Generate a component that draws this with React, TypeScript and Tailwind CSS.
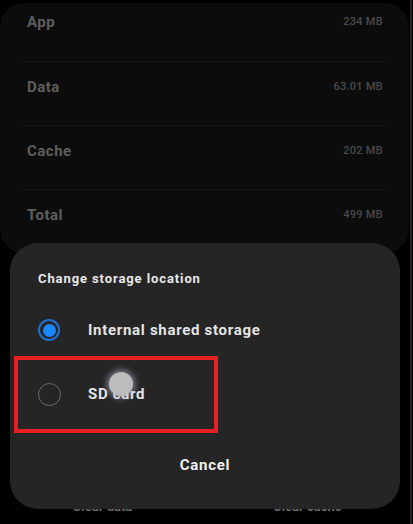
import React from "react";

const rows = [
  { label: "App", value: "234 MB" },
  { label: "Data", value: "63.01 MB" },
  { label: "Cache", value: "202 MB" },
  { label: "Total", value: "499 MB" },
];

export default function App() {
  return (
    <div
      className="relative w-[413px] h-[524px] overflow-hidden bg-black flex"
      style={{ fontFamily: "Roboto, 'Noto Sans', sans-serif" }}
    >
      <div className="w-[410px] flex flex-col pt-[3px]">
        <div className="w-[409px] h-[250px] shrink-0 rounded-[24px] bg-[#0c0c0c] flex flex-col">
          {rows.map((r, i) => (
            <div key={r.label} className="flex flex-col">
              {i > 0 && <div className="mx-[22px] h-px bg-[#161616]" />}
              <div
                className={
                  i === 0
                    ? "h-[58px] pb-[20px] flex items-center justify-between pl-[27px] pr-[26px]"
                    : "h-[63px] pb-[14px] flex items-center justify-between pl-[27px] pr-[26px]"
                }
              >
                <span className="text-[15px] font-bold text-[#5e5e5e] leading-5 tracking-[0.5px]">{r.label}</span>
                <span className="text-[11px] font-medium text-[#4a4a4a] leading-4 tracking-wide">{r.value}</span>
              </div>
            </div>
          ))}
        </div>
        <div className="grid grid-cols-2 mt-[246px] shrink-0">
          <span className="text-center text-[13px] font-bold text-[#6a6a6a] leading-4">Clear data</span>
          <span className="text-center text-[13px] font-bold text-[#6a6a6a] leading-4">Clear cache</span>
        </div>
      </div>
      <div className="w-[2px] h-full bg-[#2a2227]" />

      {/* Dialog */}
      <div className="absolute left-[10px] top-[243px] w-[390px] h-[266px] rounded-[28px] bg-[#252525] flex flex-col pt-[26px] pl-[28px]">
        <div className="h-5 flex items-center text-[13px] font-bold text-[#e8e8e8] tracking-[0.9px]">
          Change storage location
        </div>
        <div className="mt-[9px] h-[64px] flex items-center">
          <div className="w-[22px] h-[22px] rounded-full border-[2px] border-[#1d6fd0] flex items-center justify-center">
            <div className="w-[13px] h-[13px] rounded-full bg-[#1a86ff]" />
          </div>
          <span className="ml-[28px] text-[15px] font-bold text-[#e4e4e4] tracking-[0.7px]">Internal shared storage</span>
        </div>
        <div className="h-[64px] flex items-center">
          <div className="w-[23px] h-[23px] rounded-full border-[1.5px] border-[#6a6a6a]" />
          <span className="ml-[27px] text-[15px] font-bold text-[#e4e4e4] tracking-[0.7px]">SD card</span>
        </div>
        <div className="mt-[29px] h-5 flex items-center justify-center pr-[28px] text-[15px] font-bold text-[#f0f0f0] tracking-[0.7px]">
          Cancel
        </div>
      </div>

      {/* touch indicator */}
      <div className="absolute left-[109px] top-[372px] w-[24px] h-[24px] rounded-full bg-[#bcbcbc] shadow-[0_0_6px_2px_rgba(190,190,230,0.6)]" />

      {/* red annotation box */}
      <div className="absolute left-[14px] top-[356px] w-[204px] h-[77px] border-[4px] border-[#e81e25]" />
    </div>
  );
}
